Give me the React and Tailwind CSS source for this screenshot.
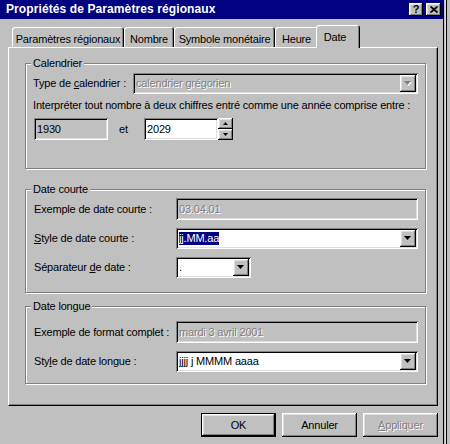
const raised =
  "bg-[#c0c0c0] shadow-[inset_-1px_-1px_0_#000,inset_1px_1px_0_#fff,inset_-2px_-2px_0_#808080,inset_2px_2px_0_#dfdfdf]";
const sunken =
  "shadow-[inset_1px_1px_0_#808080,inset_-1px_-1px_0_#fff,inset_2px_2px_0_#000,inset_-2px_-2px_0_#dfdfdf]";
const etched = "[text-shadow:1px_1px_0_#fff] text-[#808080]";

function Arrow({ up, disabled, small }) {
  const w = small ? 5 : 7;
  const h = small ? 3 : 4;
  const pts = up ? `0,${h} ${w},${h} ${w / 2},0` : `0,0 ${w},0 ${w / 2},${h}`;
  return (
    <svg width={w + 1} height={h + 1} viewBox={`0 0 ${w + 1} ${h + 1}`}>
      {disabled && <polygon points={pts} fill="#fff" transform="translate(1,1)" />}
      <polygon points={pts} fill={disabled ? "#808080" : "#000"} />
    </svg>
  );
}

function DropButton({ disabled }) {
  return (
    <div className={`${raised} w-[16px] shrink-0 flex items-center justify-center`}>
      <Arrow disabled={disabled} />
    </div>
  );
}

function Combo({ className, disabled, children }) {
  return (
    <div
      className={`${sunken} ${disabled ? "bg-[#c0c0c0]" : "bg-white"} h-[21px] p-[2px] flex ${className}`}
    >
      <div className={`flex-1 flex items-center pl-[1px] overflow-hidden whitespace-nowrap ${disabled ? etched : ""}`}>
        {children}
      </div>
      <DropButton disabled={disabled} />
    </div>
  );
}

// gray = read-only background, dim = greyed-out text
function Field({ className, gray, dim, children }) {
  return (
    <div
      className={`${sunken} ${gray ? "bg-[#c0c0c0]" : "bg-white"} h-[22px] px-[3px] flex items-center whitespace-nowrap ${className}`}
    >
      <span className={dim ? etched : ""}>{children}</span>
    </div>
  );
}

function Group({ title, className, children }) {
  return (
    <div
      className={`relative border border-[#808080] shadow-[inset_1px_1px_0_#fff,1px_1px_0_#fff] ${className}`}
    >
      <span className="absolute left-[5px] top-[-7px] bg-[#c0c0c0] px-[2px] leading-[13px]">
        {title}
      </span>
      {children}
    </div>
  );
}

function Row({ label, className, children }) {
  return (
    <div className={`flex items-center ${className}`}>
      <div className="w-[142px] shrink-0">{label}</div>
      {children}
    </div>
  );
}

function Tab({ label, w, selected }) {
  return (
    <div
      className={`${w} rounded-t-[3px] bg-[#c0c0c0] shadow-[inset_1px_1px_0_#fff,inset_-1px_0_0_#000,inset_-2px_0_0_#808080] flex justify-center ${
        selected ? "h-[23px] ml-[-2px] mb-[-1px] relative z-10 pt-[6px] pr-[6px]" : "h-[20px] pt-[6px]"
      }`}
    >
      {label}
    </div>
  );
}

function Button({ children, isDefault, disabled }) {
  return (
    <div
      className={`w-[75px] h-[24px] flex items-center justify-center ${
        isDefault ? "border border-black" : ""
      } ${raised} ${disabled ? etched : ""}`}
    >
      {children}
    </div>
  );
}

export default function App() {
  return (
    <div className="w-[450px] h-[444px] overflow-hidden bg-[#c0c0c0] flex font-['Liberation_Sans',Arial,sans-serif] text-[11px] leading-[13px] tracking-[-0.18px] text-black">
      <div className="w-[444px] shrink-0 border-r border-black flex flex-col">
        {/* title bar */}
        <div className="h-[19px] bg-[#000080] flex items-center pl-[6px] pr-[2px]">
          <span className="flex-1 text-white font-bold text-[12px] tracking-[0.1px]">
            Propriétés de Paramètres régionaux
          </span>
          <div className={`${raised} w-[14px] h-[13px] flex items-center justify-center font-bold text-[11px] leading-none`}>
            ?
          </div>
          <div className={`${raised} w-[15px] h-[13px] ml-[3px] flex items-center justify-center`}>
            <svg width="8" height="7" viewBox="0 0 8 7">
              <path d="M0.5 0.5 L7.5 6.5 M7.5 0.5 L0.5 6.5" stroke="#000" strokeWidth="1.8" />
            </svg>
          </div>
        </div>

        {/* tabs */}
        <div className="h-[22px] mt-[6px] pl-[12px] flex items-end">
          <Tab label="Paramètres régionaux" w="w-[112px]" />
          <Tab label="Nombre" w="w-[50px]" />
          <Tab label="Symbole monétaire" w="w-[101px]" />
          <Tab label="Heure" w="w-[43px]" />
          <Tab label="Date" w="w-[44px]" selected />
        </div>

        {/* panel */}
        <div className="ml-[8px] w-[430px] h-[359px] border border-white border-r-black border-b-black shadow-[inset_-1px_-1px_0_#808080] pt-[15px] pl-[16px]">
          <Group title="Calendrier" className="w-[401px] h-[106px] pt-[9px] pl-[7px]">
            <div className="flex items-center">
              <div className="w-[100px]">
                Type de <u>c</u>alendrier :
              </div>
              <Combo disabled className="w-[285px]">
                calendrier grégorien
              </Combo>
            </div>
            <div className="mt-[5px]">
              Interpréter tout nombre à deux chiffres entré comme une année comprise entre :
            </div>
            <div className="mt-[6px] flex items-center pl-[1px]">
              <Field gray className="w-[74px]">
                1930
              </Field>
              <div className="w-[36px] pl-[11px]">et</div>
              <Field className="w-[74px]">2029</Field>
              <div className="w-[15px] h-[22px] flex flex-col">
                <div className={`${raised} h-[11px] flex items-center justify-center`}>
                  <Arrow up small />
                </div>
                <div className={`${raised} h-[11px] flex items-center justify-center`}>
                  <Arrow small />
                </div>
              </div>
            </div>
          </Group>

          <Group title="Date courte" className="w-[401px] h-[104px] mt-[20px] pt-[8px] pl-[8px]">
            <Row label="Exemple de date courte :">
              <Field gray dim className="w-[242px]">
                03.04.01
              </Field>
            </Row>
            <Row className="mt-[8px]" label={<><u>S</u>tyle de date courte :</>}>
              <Combo className="w-[242px]">
                <span className="bg-[#000080] text-white">jj.MM.aa</span>
              </Combo>
            </Row>
            <Row className="mt-[8px]" label={<>Séparateur <u>d</u>e date :</>}>
              <Combo className="w-[75px]">.</Combo>
            </Row>
          </Group>

          <Group title="Date longue" className="w-[401px] h-[78px] mt-[13px] pt-[14px] pl-[8px]">
            <Row label="Exemple de format complet :">
              <Field gray dim className="w-[242px]">
                mardi 3 avril 2001
              </Field>
            </Row>
            <Row className="mt-[8px]" label={<>Sty<u>l</u>e de date longue :</>}>
              <Combo className="w-[242px]">jjjj j MMMM aaaa</Combo>
            </Row>
          </Group>
        </div>

        {/* buttons */}
        <div className="ml-[8px] w-[430px] mt-[7px] flex justify-end gap-[6px]">
          <Button isDefault>OK</Button>
          <Button>Annuler</Button>
          <Button disabled>
            <span>
              <u>A</u>ppliquer
            </span>
          </Button>
        </div>
      </div>
      <div className="flex-1 flex">
        <div className="w-[1px] bg-[#dfdfdf] ml-[1px]" />
        <div className="w-[1px] bg-black" />
      </div>
    </div>
  );
}
